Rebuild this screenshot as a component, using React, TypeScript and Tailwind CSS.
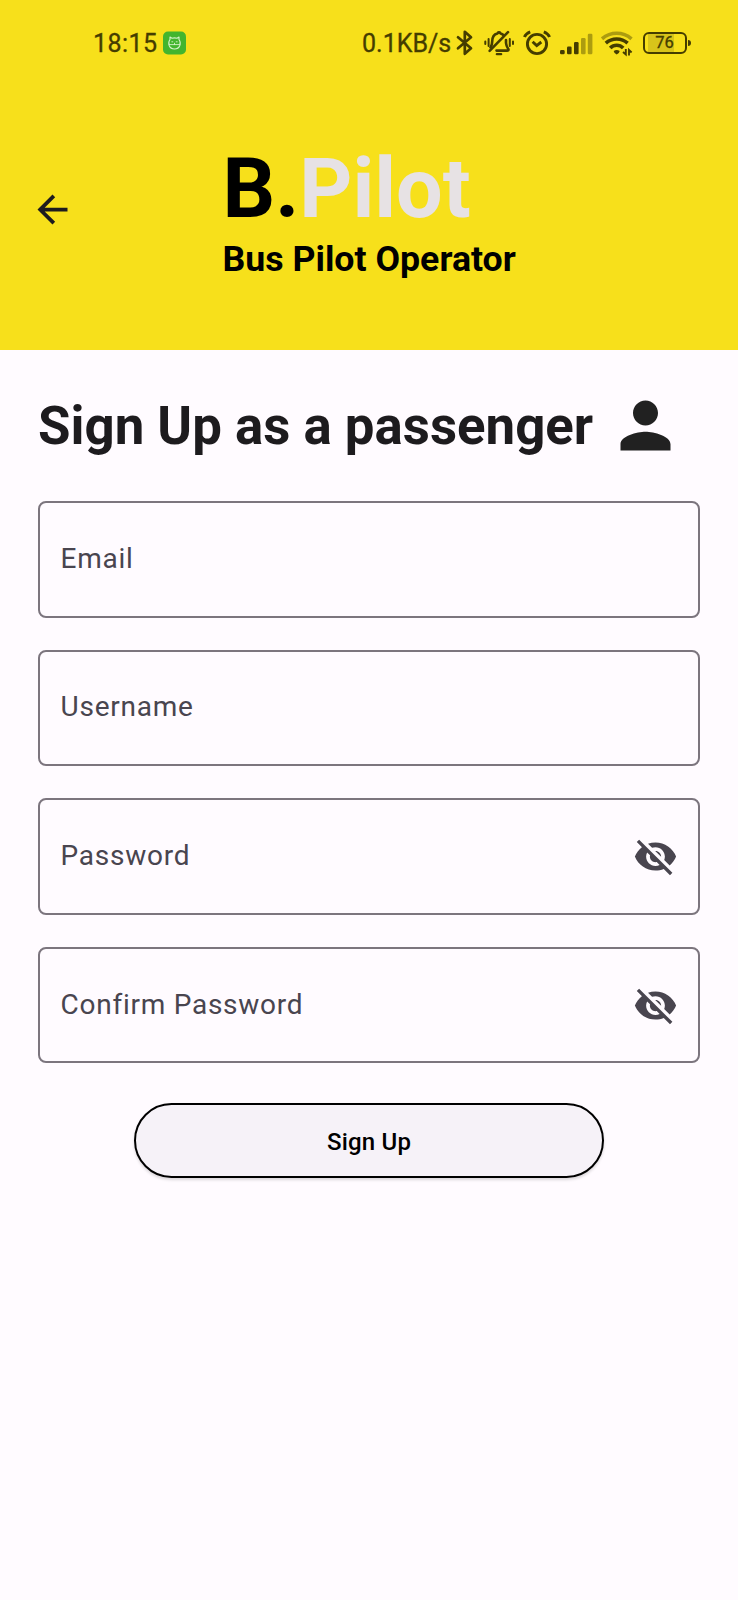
import React from "react";

const ink = "#453d00";

function StatusBar() {
  return (
    <div className="flex h-[85px] items-center text-[25px] leading-[30px] text-[#453d00]">
      <span className="ml-[93px] w-[70px] pt-[2px] tracking-[0.45px] whitespace-nowrap [-webkit-text-stroke:0.3px_#453d00]">18:15</span>
      <svg className="h-[28px] w-[24px] shrink-0" viewBox="0 0 24 28" fill="none">
        <rect x="0" y="2.5" width="23" height="23" rx="5" fill="#43b52e" />
        <g stroke="#d5f2c8" strokeWidth="1.1" strokeLinecap="round" strokeLinejoin="round">
          <path d="M7 10.5 L7 8 L9 9.2 Q11.5 8.6 14 9.2 L16 8 L16 10.5 Q18 13 16.8 16.5 Q15.5 20 11.5 20 Q7.5 20 6.2 16.5 Q5 13 7 10.5Z" />
          <path d="M8.8 12.8 H9.8 M13.2 12.8 H14.2 M6.2 15.6 H16.8 M11.5 14.2 V15.4" strokeWidth="0.9" />
        </g>
      </svg>
      <span className="ml-[175px] w-[94px] pt-[2px] whitespace-nowrap [-webkit-text-stroke:0.3px_#453d00]">0.1KB/s</span>
      <svg className="h-[28px] w-[18px] shrink-0" viewBox="0 0 18 28" fill="none" stroke={ink} strokeWidth="2.7" strokeLinecap="round" strokeLinejoin="round">
        <path d="M2 8.3 L15 19.3 L8.8 24.8 V2.8 L15 8.3 L2 19.3" />
      </svg>
      <svg className="ml-[10px] h-[28px] w-[32px] shrink-0" viewBox="0 0 32 28" fill="none" stroke={ink} strokeWidth="2.6" strokeLinecap="round">
        <path d="M6.5 18.5 Q8.2 16 8.2 12.5 Q8.2 5.6 13.4 4.4 Q15 2.4 16.6 4.4 Q18.2 4.8 19.4 6 M22 11 V14 Q22.2 17 24.4 20.2 Q24.8 21.6 23 21.6 H12.5" />
        <path d="M24 3.2 L5.6 21.8" />
        <path d="M12.8 25.2 H17.2" strokeWidth="2.2" />
        <path d="M1.3 12.5 V15 M4.6 10 V17 M25.8 10 V17 M29 12.5 V15" strokeWidth="2" />
      </svg>
      <svg className="ml-[7px] h-[28px] w-[28px] shrink-0" viewBox="0 0 28 28" fill="none" stroke={ink} strokeWidth="2.9" strokeLinecap="butt">
        <circle cx="14" cy="15" r="9.6" />
        <path d="M1.4 8 Q3 4.4 7.2 2.8 M26.6 8 Q25 4.4 20.8 2.8 M9.6 12.8 L13.7 16.6 L18.3 13" />
      </svg>
      <svg className="ml-[9px] h-[28px] w-[33px] shrink-0" viewBox="0 0 33 28" fill={ink}>
        <rect x="0" y="21" width="4.7" height="4.3" rx="1.4" />
        <rect x="7" y="17.5" width="4.6" height="7.8" rx="1.2" />
        <rect x="14" y="13" width="4.6" height="12.3" rx="1.2" />
        <rect x="21" y="9" width="4.6" height="16.3" rx="1.2" opacity="0.42" />
        <rect x="27.8" y="4.8" width="4.6" height="20.5" rx="1.2" opacity="0.42" />
      </svg>
      <svg className="ml-[8px] h-[28px] w-[32px] shrink-0" viewBox="0 0 32 28" fill="none" stroke={ink} strokeWidth="3.6">
        <path d="M1 9.8 Q7.5 4.3 15.7 4.3 Q24 4.3 30.5 9.8" opacity="0.42" />
        <path d="M4.8 14.2 Q9.5 10 15.7 10 Q22 10 26.6 14.2 M9.2 19 Q12 16.2 15.7 16.2 Q19.5 16.2 22.2 19" />
        <path d="M12.7 22 Q15.7 19.8 18.7 22 Q18.4 24 15.7 25.6 Q13 24 12.7 22Z" fill={ink} stroke="none" />
        <path d="M24.8 20 V25.5 L22 23 M28 26.5 V21 L30.6 23.5" strokeWidth="1.9" />
      </svg>
      <div className="ml-[9.5px] flex h-[22px] w-[44px] shrink-0 items-center justify-center rounded-[6px] border-[2.4px] border-[#453d00] bg-[linear-gradient(90deg,transparent_3px,#d8c41a_3px,#d8c41a_29px,transparent_29px)] pt-[1px] text-[16.5px] leading-[18px] [-webkit-text-stroke:0.3px_#453d00]">
        76
      </div>
      <div className="ml-[1px] h-[6px] w-[3px] shrink-0 rounded-r-sm bg-[#453d00]" />
    </div>
  );
}

function EyeOff() {
  return (
    <svg className="size-[45px]" viewBox="0 0 24 24" fill="#49454f">
      <path d="M12 7c2.76 0 5 2.24 5 5 0 .65-.13 1.26-.36 1.83l2.92 2.92c1.51-1.26 2.7-2.89 3.43-4.75-1.73-4.39-6-7.5-11-7.5-1.4 0-2.74.25-3.98.7l2.16 2.16C10.74 7.13 11.35 7 12 7zM2 4.27l2.28 2.28.46.46C3.08 8.3 1.78 10.02 1 12c1.73 4.39 6 7.5 11 7.5 1.55 0 3.03-.3 4.38-.84l.42.42L19.73 22 21 20.73 3.27 3 2 4.27zM7.53 9.8l1.55 1.55c-.05.21-.08.43-.08.65 0 1.66 1.34 3 3 3 .22 0 .44-.03.65-.08l1.55 1.55c-.67.33-1.41.53-2.2.53-2.76 0-5-2.24-5-5 0-.79.2-1.53.53-2.2zm4.31-.78l3.15 3.15.02-.16c0-1.66-1.34-3-3-3l-.17.01z" />
    </svg>
  );
}

function Field({ label, secret = false }: { label: string; secret?: boolean }) {
  return (
    <div className="flex h-[116.6px] items-center justify-between rounded-[8px] border-2 border-[#7c757e] pr-[20px] pl-[21px] text-[#49454f]">
      <span className="mt-[-1px] text-[28px] leading-[36px] tracking-[0.74px]">{label}</span>
      {secret && <EyeOff />}
    </div>
  );
}

export default function App() {
  return (
    <div className="flex h-[1600px] w-[738px] flex-col overflow-hidden bg-[#fffbff] font-['Roboto',sans-serif]">
      <header className="h-[350px] bg-[#f7e01b]">
        <StatusBar />
        <div className="flex">
          <svg className="mt-[101.5px] ml-[30px] size-[45px] shrink-0" viewBox="0 0 24 24" fill="#1d1b1e">
            <path d="M20 11H7.83l5.59-5.59L12 4l-8 8 8 8 1.41-1.41L7.83 13H20v-2z" />
          </svg>
          <div className="ml-[147.5px] pt-[54.5px] font-bold whitespace-nowrap text-black">
            <div className="text-[82.6px] leading-[97px]">
              B.<span className="text-[#e7e2e4]">Pilot</span>
            </div>
            <div className="pt-[1px] text-[35.7px] leading-[42px]">Bus Pilot Operator</div>
          </div>
        </div>
      </header>
      <main className="px-[37.6px] pt-[38px]">
        <div className="flex h-[75px] items-center">
          <h1 className="w-[570px] pt-[1px] pl-[0.4px] text-[52.8px] leading-[62px] font-bold whitespace-nowrap text-[#1d1b1e]">
            Sign Up as a passenger
          </h1>
          <svg className="size-[75px] shrink-0" viewBox="0 0 24 24" fill="#212121">
            <path d="M12 12c2.21 0 4-1.79 4-4s-1.79-4-4-4-4 1.79-4 4 1.79 4 4 4zm0 2c-2.67 0-8 1.34-8 4v2h16v-2c0-2.66-5.33-4-8-4z" />
          </svg>
        </div>
        <div className="mt-[38px] flex flex-col gap-8">
          <Field label="Email" />
          <Field label="Username" />
          <Field label="Password" secret />
          <Field label="Confirm Password" secret />
        </div>
        <button className="mx-auto mt-[39.6px] flex h-[75px] w-[470px] items-center justify-center rounded-full border-2 border-black bg-[#f6f2f8] pt-[3px] text-[24px] leading-[30px] font-medium tracking-[0.2px] text-black shadow-[0_2px_3px_rgba(0,0,0,0.15)]">
          Sign Up
        </button>
      </main>
    </div>
  );
}
